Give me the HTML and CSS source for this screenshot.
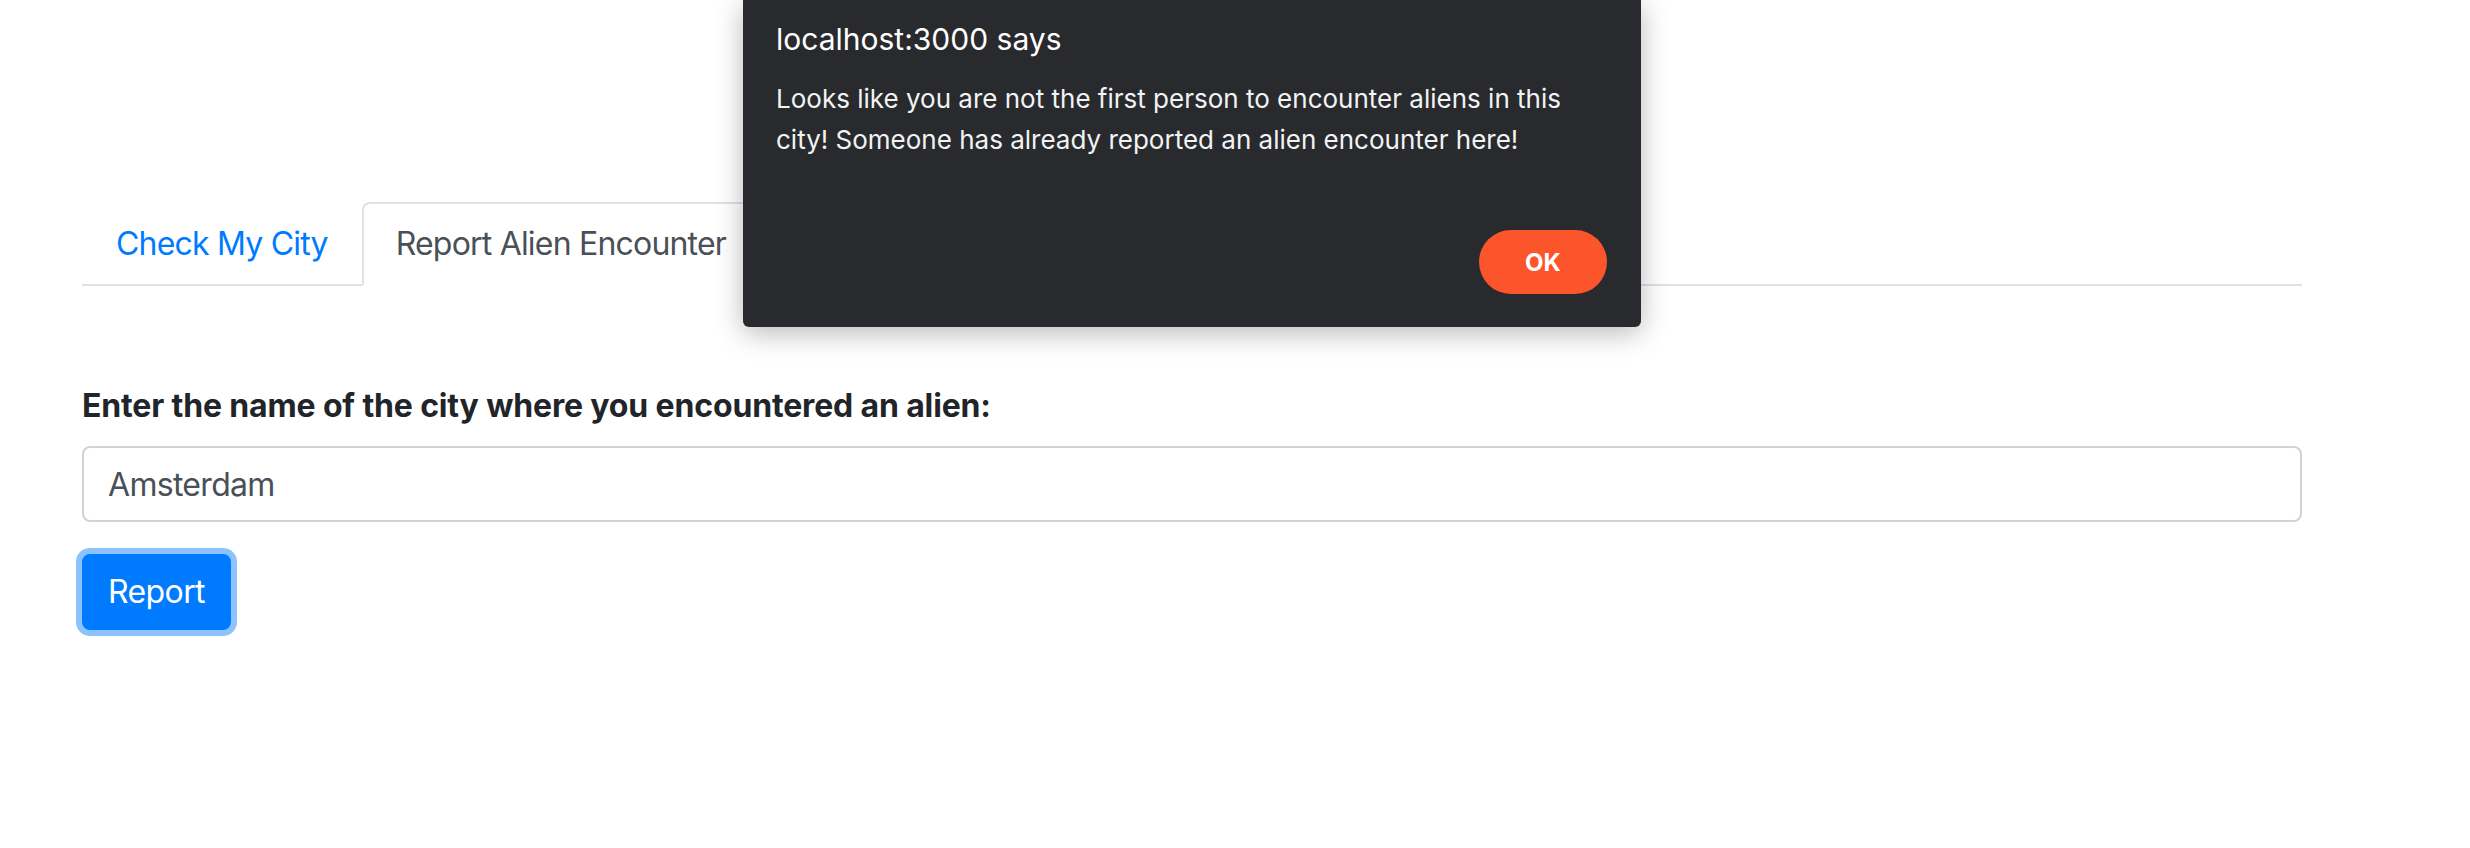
FILE: index.html
```html
<!DOCTYPE html>
<html lang="en">
<head>
<meta charset="utf-8">
<title>Alien Encounters</title>
<link rel="stylesheet" href="styles.css">
</head>
<body>
<div class="container">
  <ul class="nav-tabs">
    <li><a class="nav-link" href="#">Check My City</a></li>
    <li><a class="nav-link active" href="#">Report Alien Encounter</a></li>
  </ul>
  <div class="tab-content">
    <form class="report-form">
      <div class="form-group">
        <label class="form-label" for="city">Enter the name of the city where you encountered an alien:</label>
        <input class="form-control" id="city" type="text" value="Amsterdam">
      </div>
      <button class="btn-primary" type="button">Report</button>
    </form>
  </div>
</div>
<div class="alert-dialog">
  <div class="alert-title">localhost:3000 says</div>
  <div class="alert-message">Looks like you are not the first person to encounter aliens in this city! Someone has already reported an alien encounter here!</div>
  <div class="alert-actions"><button class="alert-ok" type="button">OK</button></div>
</div>
</body>
</html>
```
FILE: styles.css
```css
html, body {
  margin: 0;
  padding: 0;
  background: #ffffff;
}
body {
  font-family: Inter, "Liberation Sans", sans-serif;
  color: #212529;
  width: 2470px;
  height: 848px;
  overflow: hidden;
}
.container {
  padding: 202px 0 0 82px;
  width: 2220px;
}
.nav-tabs {
  list-style: none;
  margin: 0;
  padding: 0;
  display: flex;
  border-bottom: 2px solid #dee2e6;
}
.nav-tabs li {
  margin-bottom: -2px;
}
.nav-link {
  display: block;
  padding: 16px 32px;
  font-size: 32px;
  line-height: 48px;
  letter-spacing: -0.8px;
  color: #007bff;
  text-decoration: none;
  border: 2px solid transparent;
  border-radius: 8px 8px 0 0;
}
.nav-link.active {
  color: #495057;
  background: #fff;
  border-color: #dee2e6 #dee2e6 #fff;
}
.tab-content {
  padding-top: 96px;
}
.form-group {
  margin-bottom: 32px;
}
.form-label {
  display: block;
  font-size: 32px;
  line-height: 48px;
  font-weight: 700;
  letter-spacing: -0.15px;
  margin-bottom: 16px;
}
.form-control {
  display: block;
  box-sizing: border-box;
  width: 100%;
  height: 76px;
  padding: 12px 24px;
  font-family: inherit;
  font-size: 32px;
  line-height: 48px;
  letter-spacing: -0.7px;
  color: #495057;
  background: #fff;
  border: 2px solid #ced4da;
  border-radius: 8px;
  outline: none;
}
.btn-primary {
  display: inline-block;
  height: 76px;
  padding: 12px 24px;
  font-family: inherit;
  font-size: 32px;
  line-height: 48px;
  letter-spacing: -0.6px;
  color: #fff;
  background: #007bff;
  border: 2px solid #007bff;
  border-radius: 8px;
  box-shadow: 0 0 0 6px rgba(0, 123, 255, 0.45);
}
.alert-dialog {
  position: absolute;
  top: 0;
  left: 743px;
  width: 898px;
  height: 327px;
  box-sizing: border-box;
  padding: 19px 34px 33px 33px;
  background: #292a2d;
  border-radius: 0 0 6px 6px;
  box-shadow: 0 6px 28px rgba(0, 0, 0, 0.28);
  display: flex;
  flex-direction: column;
  color: #fff;
}
.alert-title {
  font-size: 30px;
  line-height: 40px;
}
.alert-message {
  margin-top: 19px;
  font-size: 26px;
  line-height: 41px;
  color: #f1f3f4;
}
.alert-actions {
  margin-top: auto;
  display: flex;
  justify-content: flex-end;
}
.alert-ok {
  width: 128px;
  height: 64px;
  border: none;
  border-radius: 32px;
  background: #fc552c;
  color: #fff;
  font-family: inherit;
  font-size: 24px;
  font-weight: 700;
}
```
